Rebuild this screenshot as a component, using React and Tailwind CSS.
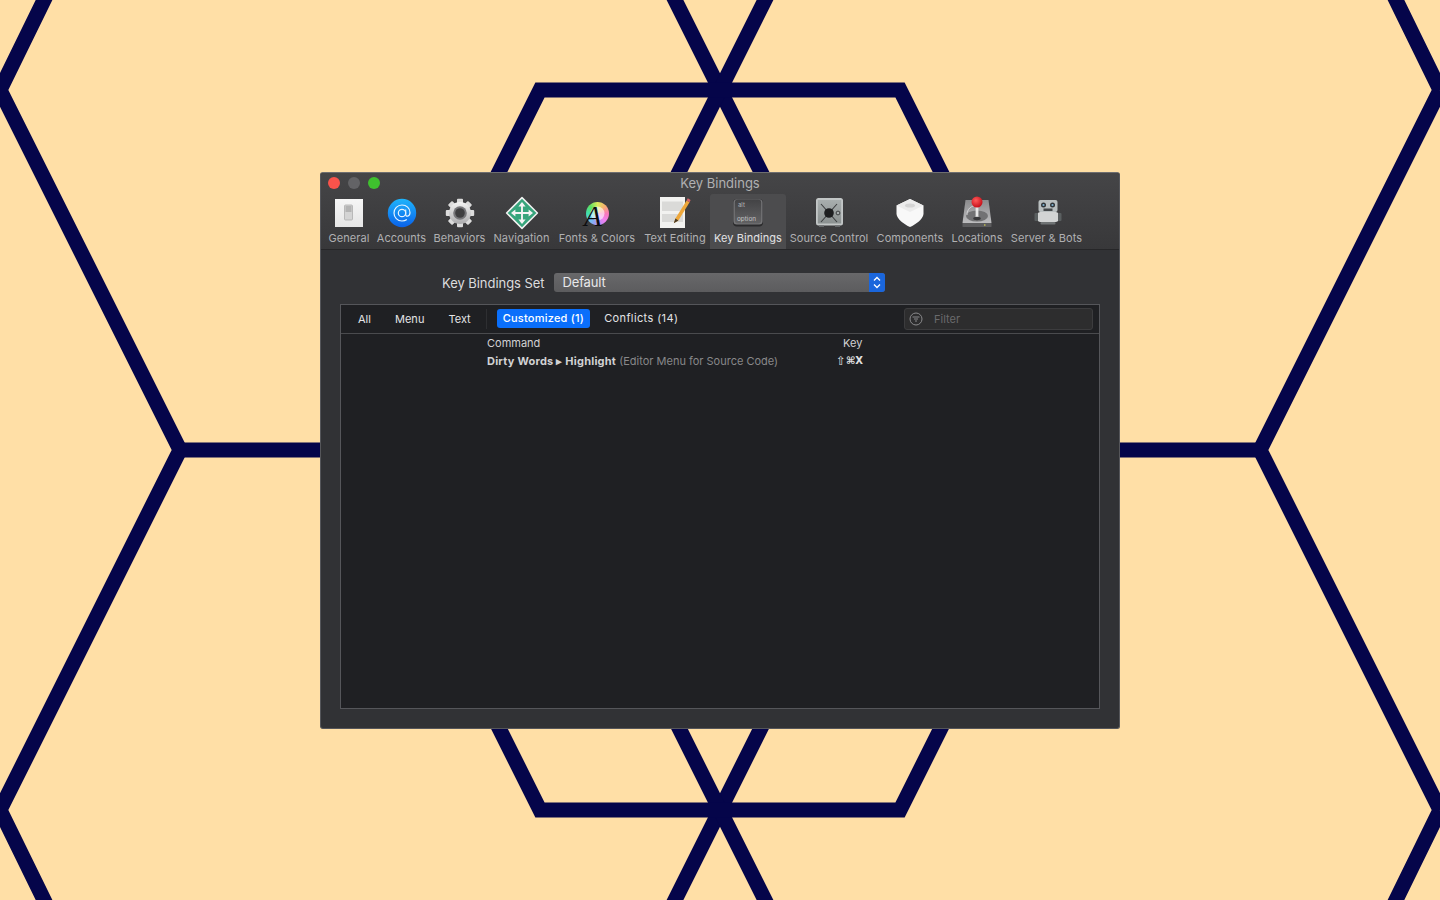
const hexPaths = [
  "M46 -4 L0 90 L180 450 L0 810 L46 904",
  "M1394 -4 L1440 90 L1260 450 L1440 810 L1394 904",
  "M180 450 H1260",
  "M672 -6 L900 450 L672 906",
  "M768 -6 L540 450 L768 906",
  "M360 450 L540 90 H900 L1080 450 L900 810 H540 Z",
];

function Backdrop() {
  return (
    <svg className="absolute inset-0 w-[1440px] h-[900px]" viewBox="0 0 1440 900" fill="none">
      {hexPaths.map((d) => (
        <path key={d} d={d} stroke="#05054a" strokeWidth="15" strokeLinejoin="miter" />
      ))}
    </svg>
  );
}

function IconGeneral() {
  return (
    <svg width="36" height="36" viewBox="0 0 36 36">
      <defs>
        <linearGradient id="gen" x1="0" y1="0" x2="0" y2="1">
          <stop offset="0" stopColor="#f6f6f6" />
          <stop offset="1" stopColor="#e6e6e6" />
        </linearGradient>
      </defs>
      <rect x="4" y="4" width="28" height="28" fill="url(#gen)" />
      <rect x="13.5" y="10" width="8" height="15" rx="1" fill="#d4d4d4" stroke="#a8a8a8" strokeWidth="0.7" />
      <rect x="14.5" y="11" width="6" height="6" fill="#b4b4b4" />
    </svg>
  );
}

function IconAccounts() {
  return (
    <svg width="36" height="36" viewBox="0 0 36 36">
      <defs>
        <linearGradient id="acc" x1="0" y1="0" x2="0" y2="1">
          <stop offset="0" stopColor="#1eb4fb" />
          <stop offset="1" stopColor="#0a62ea" />
        </linearGradient>
      </defs>
      <circle cx="18" cy="18" r="14.2" fill="url(#acc)" />
      <circle cx="18" cy="18" r="3.7" fill="none" stroke="#e6f4ff" strokeWidth="1.2" />
      <path d="M21.7 14.4 V19.4 C21.7 22.2 26 21.8 26 17.6 C26 13 22.4 10 18 10 C13.4 10 10 13.6 10 18 C10 22.4 13.4 26 18 26 C20 26 21.4 25.6 22.8 24.6" fill="none" stroke="#e6f4ff" strokeWidth="1.2" />
    </svg>
  );
}

function IconGear() {
  const teeth = [0, 45, 90, 135, 180, 225, 270, 315];
  return (
    <svg width="36" height="36" viewBox="0 0 36 36">
      <defs>
        <linearGradient id="gear" x1="0" y1="0" x2="0" y2="1">
          <stop offset="0" stopColor="#f4f4f4" />
          <stop offset="1" stopColor="#ababad" />
        </linearGradient>
      </defs>
      {teeth.map((a) => (
        <rect key={a} x="15" y="3.8" width="6" height="7" rx="1" fill="#dcdcdc" transform={`rotate(${a} 18 18)`} />
      ))}
      <circle cx="18" cy="18" r="11" fill="url(#gear)" />
      <circle cx="18" cy="18" r="6.8" fill="#77777a" />
      <circle cx="18" cy="18" r="4.8" fill="#3e3e40" />
    </svg>
  );
}

function IconNavigation() {
  return (
    <svg width="36" height="36" viewBox="0 0 36 36">
      <path d="M18 2.6 L33.4 18 L18 33.4 L2.6 18 Z" fill="#37a57c" stroke="#f1f1f1" strokeWidth="1.5" strokeLinejoin="round" />
      <path d="M18 10 V26 M10 18 H26" fill="none" stroke="#f4f4f4" strokeWidth="1.9" />
      <g fill="#f4f4f4">
        <path d="M18 7 L21.6 11.4 H14.4 Z" />
        <path d="M18 29 L21.6 24.6 H14.4 Z" />
        <path d="M7 18 L11.4 14.4 V21.6 Z" />
        <path d="M29 18 L24.6 14.4 V21.6 Z" />
      </g>
    </svg>
  );
}

function IconFonts() {
  return (
    <svg width="36" height="36" viewBox="0 0 36 36">
      <foreignObject x="7" y="7" width="23" height="23">
        <div className="w-[23px] h-[23px] rounded-full bg-[conic-gradient(#d8e85a,#f8b070,#f878b8,#f080f0,#b090f5,#70c0f5,#3fe0b0,#60e060,#d8e85a)]" />
      </foreignObject>
      <circle cx="18.5" cy="18.5" r="7" fill="#ffffff" opacity="0.6" />
      <text x="5" y="31" fontFamily="'Liberation Serif', serif" fontStyle="italic" fontSize="29" fill="#0c0c0e">A</text>
    </svg>
  );
}

function IconText() {
  return (
    <svg width="36" height="36" viewBox="0 0 36 36">
      <rect x="3" y="2" width="25" height="31" fill="#f2f2f0" />
      <g fill="#dadad8">
        <rect x="5" y="6.5" width="21" height="9.5" />
        <rect x="5" y="19" width="21" height="8" />
      </g>
      <path d="M18.4 23.6 L29.6 5.4 L32.6 7.2 L21.4 25.4 L17 28 Z" fill="#eea73a" />
      <path d="M29.6 5.4 L30.8 3.2 L33.6 5 L32.6 7.2 Z" fill="#d8656a" />
      <path d="M18.4 23.6 L21.4 25.4 L16.8 28.2 Z" fill="#4a3a24" />
    </svg>
  );
}

function IconKey() {
  return (
    <svg width="36" height="36" viewBox="0 0 36 36">
      <defs>
        <linearGradient id="key" x1="0" y1="0" x2="0" y2="1">
          <stop offset="0" stopColor="#434345" />
          <stop offset="1" stopColor="#616163" />
        </linearGradient>
      </defs>
      <rect x="3" y="4" width="30" height="27.6" rx="4" fill="#2b2b2d" />
      <rect x="3.4" y="4.2" width="29.2" height="25.4" rx="3.5" fill="#757577" />
      <rect x="4.8" y="4.6" width="26.4" height="23.8" rx="3" fill="url(#key)" />
      <text x="8" y="11.5" fontFamily="Inter, sans-serif" fontSize="6" fill="#b4b4b6">alt</text>
      <text x="7" y="25.5" fontFamily="Inter, sans-serif" fontSize="6.4" fill="#c2c2c4">option</text>
    </svg>
  );
}

function IconSafe() {
  return (
    <svg width="36" height="36" viewBox="0 0 36 36">
      <defs>
        <linearGradient id="safe" x1="0" y1="0" x2="0" y2="1">
          <stop offset="0" stopColor="#a8aeae" />
          <stop offset="1" stopColor="#8a9090" />
        </linearGradient>
      </defs>
      <rect x="5" y="3" width="27" height="27.5" rx="2.5" fill="#c2c6c6" />
      <rect x="6.8" y="5" width="23.4" height="23.5" fill="url(#safe)" />
      <path d="M10 9 L26 27 M26 9 L10 27" stroke="#3c3e40" strokeWidth="1.1" />
      <circle cx="18" cy="18" r="4.8" fill="#1d1e20" />
      <circle cx="27" cy="18" r="1.9" fill="#a8aeae" stroke="#303234" strokeWidth="0.9" />
      <rect x="8" y="30.5" width="5" height="1.5" fill="#66696b" />
      <rect x="24" y="30.5" width="5" height="1.5" fill="#66696b" />
    </svg>
  );
}

function IconComponents() {
  return (
    <svg width="36" height="36" viewBox="0 0 36 36">
      <path d="M18 4 L31.5 10.5 V19 C31 24 24 29.5 18 32 C12 29.5 5 24 4.5 19 V10.5 Z" fill="#f8f8f8" />
      <path d="M18 4 L31.5 10.5 L18 17 L4.5 10.5 Z" fill="#ececec" />
      <ellipse cx="18" cy="10.6" rx="5" ry="2" fill="#d4d4d4" />
    </svg>
  );
}

function IconLocations() {
  return (
    <svg width="36" height="36" viewBox="0 0 36 36">
      <defs>
        <linearGradient id="disk" x1="0" y1="0" x2="0" y2="1">
          <stop offset="0" stopColor="#8b8b8d" />
          <stop offset="1" stopColor="#bcbcbe" />
        </linearGradient>
        <radialGradient id="ball" cx="0.4" cy="0.35" r="0.7">
          <stop offset="0" stopColor="#ff5a5a" />
          <stop offset="1" stopColor="#c20a14" />
        </radialGradient>
      </defs>
      <path d="M6.5 5 H29.5 L32.5 28 H3.5 Z" fill="url(#disk)" />
      <rect x="3.5" y="28" width="29" height="4" rx="0.5" fill="#5c5c5e" />
      <rect x="25" y="29.4" width="1.5" height="1.2" fill="#d4d050" />
      <ellipse cx="18" cy="21" rx="11" ry="5.6" fill="#727274" />
      <path d="M8 20 C8 14 12 10.5 18 10.5" fill="none" stroke="#dcdcde" strokeWidth="0.8" />
      <rect x="16.6" y="10" width="2.8" height="13" fill="#e6e6e6" />
      <ellipse cx="18" cy="23.5" rx="3.8" ry="1.7" fill="#3a3a3c" />
      <circle cx="18" cy="7" r="5.5" fill="url(#ball)" />
    </svg>
  );
}

function IconServer() {
  return (
    <svg width="36" height="36" viewBox="0 0 36 36">
      <rect x="9.5" y="5" width="19" height="12" rx="2" fill="#b9bfc0" />
      <circle cx="14.5" cy="10" r="2.5" fill="#30363a" />
      <circle cx="14.5" cy="10" r="1.1" fill="#7fb2d0" />
      <circle cx="23.5" cy="10" r="2.5" fill="#30363a" />
      <circle cx="23.5" cy="10" r="1.1" fill="#7fb2d0" />
      <rect x="14.5" y="13.5" width="9" height="2.5" fill="#44484a" />
      <rect x="8.5" y="17" width="21" height="10" rx="3" fill="#d2d4d4" />
      <rect x="5.5" y="18" width="3.5" height="8" rx="1" fill="#5a5f60" />
      <rect x="29" y="18" width="3.5" height="8" rx="1" fill="#5a5f60" />
      <rect x="11.5" y="27" width="15" height="2.5" rx="1" fill="#6f7374" />
    </svg>
  );
}

const tools = [
  { label: "General", w: "w-[48px]", Icon: IconGeneral },
  { label: "Accounts", w: "w-[57px]", Icon: IconAccounts },
  { label: "Behaviors", w: "w-[59px]", Icon: IconGear },
  { label: "Navigation", w: "w-[65px]", Icon: IconNavigation },
  { label: "Fonts & Colors", w: "w-[86px]", Icon: IconFonts },
  { label: "Text Editing", w: "w-[70px]", Icon: IconText },
  { label: "Key Bindings", w: "w-[76px]", Icon: IconKey, active: true },
  { label: "Source Control", w: "w-[86px]", Icon: IconSafe },
  { label: "Components", w: "w-[76px]", Icon: IconComponents },
  { label: "Locations", w: "w-[58px]", Icon: IconLocations },
  { label: "Server & Bots", w: "w-[81px]", Icon: IconServer },
];

export default function App() {
  return (
    <div className="relative w-[1440px] h-[900px] overflow-hidden bg-[#ffdfa6] font-['Inter','Liberation_Sans',sans-serif]">
      <Backdrop />
      <div className="relative pt-[172px] flex justify-center">
        <div className="w-[800px] h-[557px] flex flex-col rounded-[3px] bg-[#313235] border border-[#55565a] border-t-[#6e6e70] overflow-hidden">
          <div className="h-[77px] shrink-0 flex flex-col bg-gradient-to-b from-[#454547] to-[#38383a] border-b border-[#262628]">
            <div className="relative h-[21px] shrink-0 flex items-center justify-center">
              <div className="absolute left-[7px] top-[4px] flex gap-2">
                <span className="w-3 h-3 rounded-full bg-[#f9534b]" />
                <span className="w-3 h-3 rounded-full bg-[#636366]" />
                <span className="w-3 h-3 rounded-full bg-[#3fc02e]" />
              </div>
              <span className="text-[13px] leading-none text-[#b0b0b2] -mt-[1px]">Key Bindings</span>
            </div>
            <div className="flex pl-[4px] flex-1">
              {tools.map(({ label, w, Icon, active }) => (
                <div
                  key={label}
                  className={`${w} shrink-0 flex flex-col items-center rounded-t-[3px] ${active ? "bg-[#4c4c4e] text-[#e2e2e4]" : "text-[#b0b0b2]"}`}
                >
                  <div className="h-[36px] mt-[1px] flex items-center justify-center">
                    <Icon />
                  </div>
                  <span className="text-[11px] leading-[14px] tracking-[0.05px] whitespace-nowrap">{label}</span>
                </div>
              ))}
            </div>
          </div>

          <div className="flex items-center h-[19px] mt-[23px] ml-[121px]">
            <span className="text-[13px] text-[#dcdcde] whitespace-nowrap translate-y-px tracking-[-0.05px]">Key Bindings Set</span>
            <div className="ml-[9px] w-[331px] h-[19px] flex rounded-[3px] overflow-hidden bg-gradient-to-b from-[#68686a] to-[#5c5c5e]">
              <span className="flex-1 pl-[9px] text-[13px] leading-[19px] tracking-[-0.15px] text-[#e8e8ea]">Default</span>
              <span className="w-4 flex items-center justify-center bg-[#1a66dc]">
                <svg width="10" height="15" viewBox="0 0 10 15" fill="none" stroke="#fff" strokeWidth="1.3">
                  <path d="M2 5.5 L5 2.5 L8 5.5 M2 9.5 L5 12.5 L8 9.5" />
                </svg>
              </span>
            </div>
          </div>

          <div className="mt-3 mx-[19px] h-[405px] flex flex-col bg-[#1f2023] border border-[#55565a]">
            <div className="h-[29px] shrink-0 flex items-center border-b border-[#4a4b4e] text-[11px] text-[#e4e4e6]">
              <span className="ml-[17px]">All</span>
              <span className="ml-[24px] tracking-[0.05px]">Menu</span>
              <span className="ml-[24px]">Text</span>
              <span className="ml-[15px] w-px h-[20px] bg-[#2e2f32]" />
              <span className="ml-[10px] h-[19px] px-[6px] rounded-[3px] bg-[#0a6ffb] text-white leading-[19px] font-medium tracking-[0.22px] -translate-y-px">Customized (1)</span>
              <span className="ml-[14px] tracking-[0.38px] -translate-y-px">Conflicts (14)</span>
              <div className="ml-auto mr-[6px] w-[189px] h-[22px] flex items-center rounded-[3px] bg-[#2d2d2e] border border-[#3c3c3e]">
                <svg className="ml-[4px]" width="14" height="14" viewBox="0 0 14 14" fill="none" stroke="#8a8a8c" strokeWidth="1">
                  <circle cx="7" cy="7" r="6" />
                  <path d="M3.5 5 H10.5 M5 7 H9 M6 9 H8" />
                </svg>
                <span className="ml-[11px] text-[#6a6a6c]">Filter</span>
              </div>
            </div>
            <div className="pl-[146px] text-[11px] leading-[18px] text-[#d2d2d4]">
              <div className="flex">
                <span className="w-[356px]">Command</span>
                <span>Key</span>
              </div>
              <div className="flex">
                <span className="w-[349px] whitespace-nowrap">
                  <b className="font-bold tracking-[0.22px]">Dirty Words ▸ Highlight</b>
                  <span className="text-[#88888a]"> (Editor Menu for Source Code)</span>
                </span>
                <span className="font-bold font-['DejaVu_Sans',sans-serif] text-[10px] leading-[18px] text-[#e0e0e2] flex">
                  <span className="font-normal text-[12px]">⇧</span>
                  <span>⌘X</span>
                </span>
              </div>
            </div>
          </div>
        </div>
      </div>
    </div>
  );
}
